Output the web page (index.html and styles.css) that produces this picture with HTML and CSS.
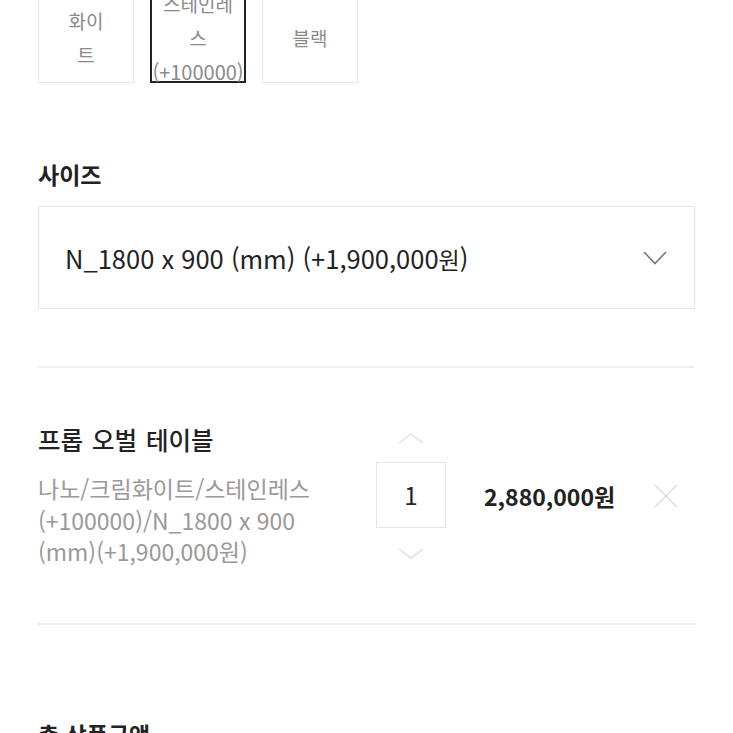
FILE: index.html
```html
<!DOCTYPE html>
<html lang="ko">
<head>
<meta charset="utf-8">
<link rel="stylesheet" href="styles.css">
</head>
<body>
<div class="page">
  <div class="colors">
    <div class="chip"><span class="chip-text">화이<br>트</span></div>
    <div class="chip selected"><span class="chip-text">스테인레<br>스<br><span class="num">(+100000)</span></span></div>
    <div class="chip"><span class="chip-text">블랙</span></div>
  </div>

  <div class="label">사이즈</div>
  <div class="select">
    <span class="select-text">N_1800 x 900 (mm) (+1,900,000<span class="won">원</span>)</span>
    <svg class="chev" width="24" height="14" viewBox="0 0 24 14"><polyline points="1,1 12,12.5 23,1" fill="none" stroke="#777" stroke-width="1.6"/></svg>
  </div>

  <div class="divider first"></div>

  <div class="product">
    <div class="info">
      <div class="name">프롭 오벌 테이블</div>
      <div class="opts">나노/크림화이트/스테인레스 (+100000)/N_1800 x 900<br>(mm)(+1,900,000원)</div>
    </div>
    <div class="qty">
      <svg class="arrow up" width="26" height="11" viewBox="0 0 26 11"><polyline points="1,10 13,1 25,10" fill="none" stroke="#ddd" stroke-width="1.4"/></svg>
      <div class="qty-box">1</div>
      <svg class="arrow down" width="26" height="11" viewBox="0 0 26 11"><polyline points="1,1 13,10 25,1" fill="none" stroke="#ddd" stroke-width="1.4"/></svg>
    </div>
    <div class="price">2,880,000원</div>
    <svg class="remove" width="24" height="24" viewBox="0 0 24 24"><path d="M1 1 L23 23 M23 1 L1 23" fill="none" stroke="#dadada" stroke-width="1.2"/></svg>
  </div>

  <div class="divider"></div>

  <div class="total">총 상품금액</div>
</div>
</body>
</html>
```

FILE: styles.css
```css
* { box-sizing: border-box; }
html, body { margin: 0; padding: 0; background: #fff; }
body {
  font-family: "Noto Sans CJK KR", "Noto Sans", sans-serif;
  color: #222;
  overflow: hidden;
}
.page {
  padding: 0 38px;
  margin-top: -7px;
}
.colors {
  display: flex;
  gap: 16px;
}
.chip {
  width: 96px;
  height: 90px;
  border: 1px solid #e8e8e8;
  display: flex;
  align-items: center;
  justify-content: center;
  font-size: 19px;
  line-height: 34px;
  color: #8a8a8a;
}
.chip-text {
  display: block;
  text-align: center;
  white-space: nowrap;
}
.chip .num { font-size: 20px; }
.chip.selected {
  border: 2px solid #222;
}
.label {
  margin-top: 75px;
  font-size: 23px;
  line-height: 32px;
  font-weight: 700;
  color: #222;
}
.select {
  margin-top: 16px;
  height: 103px;
  border: 1px solid #e6e6e6;
  display: flex;
  align-items: center;
  justify-content: space-between;
  padding: 0 27px 0 26px;
}
.select-text {
  font-size: 25.5px;
  color: #222;
}
.select-text .won { font-size: 23px; }
.chev { display: block; }
.divider {
  height: 2px;
  background: #f0f0f0;
}
.divider.first { margin-top: 57px; }
.product {
  display: flex;
  align-items: center;
  padding: 56px 0 55px;
}
.info {
  flex: 0 0 338px;
  padding-right: 20px;
}
.name {
  font-size: 24.5px;
  line-height: 32px;
  font-weight: 500;
  color: #222;
  word-spacing: 2px;
}
.opts {
  margin-top: 17px;
  font-size: 23px;
  line-height: 31.5px;
  color: #999;
}
.qty {
  flex: 0 0 70px;
  display: flex;
  flex-direction: column;
  align-items: center;
}
.arrow { display: block; }
.qty-box {
  width: 70px;
  height: 66px;
  border: 1px solid #e6e6e6;
  display: flex;
  align-items: center;
  justify-content: center;
  font-size: 24px;
  color: #222;
  margin: 18px 0 20px;
}
.price {
  margin-left: 38px;
  font-size: 23px;
  font-weight: 700;
  color: #222;
}
.remove {
  display: block;
  margin-left: auto;
  margin-right: 17px;
}
.total {
  margin-top: 93px;
  font-size: 23px;
  line-height: 32px;
  font-weight: 700;
  color: #222;
}
```
